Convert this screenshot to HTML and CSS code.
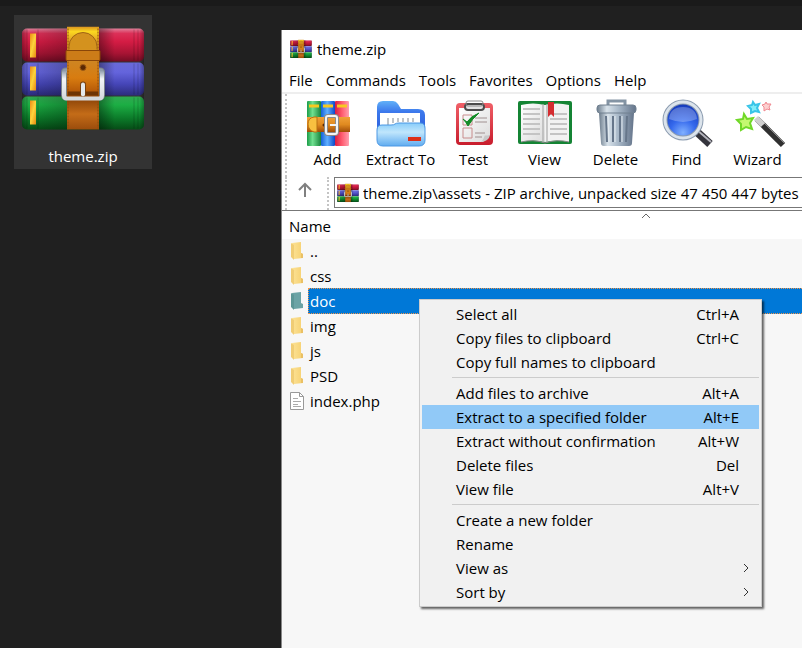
FILE: index.html
```html
<!DOCTYPE html>
<html lang="en">
<head>
    <meta charset="UTF-8">
    <meta name="viewport" content="width=device-width, initial-scale=1.0">
    <title>theme.zip</title>
    <link rel="stylesheet" href="styles.css">
</head>
<body>
    <!-- shared icons -->
    <svg class="sprite" aria-hidden="true">
        <defs>
            <linearGradient id="red" x1="0" y1="0" x2="0" y2="1">
                <stop offset="0" stop-color="#e0809a"/><stop offset=".15" stop-color="#dc3058"/>
                <stop offset=".4" stop-color="#d41c44"/><stop offset=".75" stop-color="#a81434"/><stop offset="1" stop-color="#740c24"/>
            </linearGradient>
            <linearGradient id="blue" x1="0" y1="0" x2="0" y2="1">
                <stop offset="0" stop-color="#6a6ad8"/><stop offset=".3" stop-color="#6464dc"/>
                <stop offset=".65" stop-color="#4646b8"/><stop offset="1" stop-color="#2c2c7c"/>
            </linearGradient>
            <linearGradient id="green" x1="0" y1="0" x2="0" y2="1">
                <stop offset="0" stop-color="#30a850"/><stop offset=".25" stop-color="#1cae44"/>
                <stop offset=".65" stop-color="#0c7c2a"/><stop offset="1" stop-color="#064c16"/>
            </linearGradient>
            <linearGradient id="gold" x1="0" y1="0" x2="1" y2="1">
                <stop offset="0" stop-color="#ee8a14"/><stop offset=".5" stop-color="#fcd43c"/><stop offset="1" stop-color="#e88a10"/>
            </linearGradient>
            <linearGradient id="belt" x1="0" y1="0" x2="0" y2="1">
                <stop offset="0" stop-color="#d89020"/><stop offset=".05" stop-color="#fcd820"/><stop offset=".14" stop-color="#e0a024"/>
                <stop offset=".35" stop-color="#cf8420"/><stop offset=".5" stop-color="#d87c10"/><stop offset=".62" stop-color="#b85c08"/><stop offset=".7" stop-color="#8c4408"/>
                <stop offset=".85" stop-color="#c46c18"/><stop offset="1" stop-color="#9a4c0c"/>
            </linearGradient>
            <linearGradient id="steel" x1="0" y1="0" x2="0" y2="1">
                <stop offset="0" stop-color="#8f9cac"/><stop offset=".3" stop-color="#f2f4f6"/><stop offset="1" stop-color="#d4d8dc"/>
            </linearGradient>
            <linearGradient id="spineShade" x1="0" y1="0" x2="1" y2="0">
                <stop offset="0" stop-color="#000" stop-opacity=".3"/><stop offset=".05" stop-color="#000" stop-opacity="0"/>
                <stop offset=".62" stop-color="#000" stop-opacity=".4"/><stop offset=".76" stop-color="#000" stop-opacity="0"/>
                <stop offset=".96" stop-color="#000" stop-opacity="0"/><stop offset="1" stop-color="#000" stop-opacity=".3"/>
            </linearGradient>
            <linearGradient id="bookGreen"><stop offset="0" stop-color="#1c9c48"/><stop offset=".4" stop-color="#70e090"/><stop offset="1" stop-color="#18843c"/></linearGradient>
            <linearGradient id="bookBlue"><stop offset="0" stop-color="#1460d8"/><stop offset=".45" stop-color="#60b0ff"/><stop offset="1" stop-color="#0c48c8"/></linearGradient>
            <linearGradient id="bookRed"><stop offset="0" stop-color="#d81c40"/><stop offset=".5" stop-color="#ff5c70"/><stop offset="1" stop-color="#ffa0b0"/></linearGradient>
            <linearGradient id="strap" x1="0" y1="0" x2="0" y2="1"><stop offset="0" stop-color="#f0a038"/><stop offset=".5" stop-color="#e08a20"/><stop offset="1" stop-color="#a04c08"/></linearGradient>
            <linearGradient id="folderBack" x1="0" y1="0" x2="0" y2="1"><stop offset="0" stop-color="#60b0f8"/><stop offset=".3" stop-color="#3c78ec"/><stop offset="1" stop-color="#2858d8"/></linearGradient>
            <linearGradient id="folderFront" x1="0" y1="0" x2="0" y2="1"><stop offset="0" stop-color="#88ccfa"/><stop offset=".4" stop-color="#c0e6fc"/><stop offset="1" stop-color="#60acf0"/></linearGradient>
            <linearGradient id="can"><stop offset="0" stop-color="#6c7c8c"/><stop offset=".25" stop-color="#d8e2ea"/><stop offset=".55" stop-color="#a8b8c8"/><stop offset="1" stop-color="#64748a"/></linearGradient>
            <linearGradient id="clip" x1="0" y1="0" x2="0" y2="1"><stop offset="0" stop-color="#f06068"/><stop offset="1" stop-color="#c81c2c"/></linearGradient>
            <linearGradient id="paper" x1="0" y1="0" x2="1" y2="1"><stop offset="0" stop-color="#fff"/><stop offset="1" stop-color="#dcdcdc"/></linearGradient>
            <radialGradient id="lens" cx=".5" cy=".85" r=".8"><stop offset="0" stop-color="#80b0ff"/><stop offset=".45" stop-color="#3468ec"/><stop offset="1" stop-color="#1438b8"/></radialGradient>
            <linearGradient id="fold"><stop offset="0" stop-color="#fce296"/><stop offset="1" stop-color="#f6d070"/></linearGradient>
        </defs>

        <symbol id="winrar" viewBox="0 0 124 104">
            <rect x="1" y="2" width="122" height="33" rx="5" fill="url(#red)"/>
            <rect x="1" y="36" width="122" height="33" rx="5" fill="url(#blue)"/>
            <rect x="1" y="70" width="122" height="33" rx="5" fill="url(#green)"/>
            <rect x="1" y="2" width="122" height="101" rx="5" fill="url(#spineShade)"/>
            <path d="M6 3v31M17 3v31M113 3v31M117 3v31M6 37v31M17 37v31M113 37v31M117 37v31M6 71v31M17 71v31M113 71v31M117 71v31" stroke="#000" stroke-opacity=".18"/>
            <g fill="url(#gold)"><rect x="9" y="7" width="6" height="24"/><rect x="9" y="40" width="6" height="24"/><rect x="9" y="74" width="6" height="24"/></g>
            <path d="M48 44h-3q-2 0-2 2v22q0 3 3 3h32q3 0 3-3V46q0-2-2-2h-3" fill="none" stroke="#7c848c" stroke-width="6"/>
            <path d="M46 0h32v103H46z" fill="url(#belt)"/>
            <path d="M47 2v100M77 2v100" stroke="#8a4808" stroke-dasharray="2 1"/>
            <path d="M48 23V20a14 14 0 0 1 28 0v3" fill="#d4921e" stroke="#a06414"/>
            <rect x="45" y="24" width="34" height="10" rx="1" fill="#cc7c18" stroke="#8a4608"/>
            <path d="M47 65h30v4H47z" fill="#6e3404"/>
            <path d="M46 44h-1q-2 0-2 2v23q0 3 3 3h32q3 0 3-3V46q0-2-2-2h-1" fill="none" stroke="url(#steel)" stroke-width="4"/>
            <circle cx="62" cy="41" r="3" fill="#5a2804" stroke="#a05c14"/>
            <path d="M62 58v9" stroke="#774010" stroke-width="6" stroke-linecap="round"/>
            <path d="M62 58v10" stroke="#e4e8ec" stroke-width="4" stroke-linecap="round"/>
        </symbol>

        <symbol id="folder" viewBox="0 0 14 18">
            <path d="M2 1l9-1v11l2 1v4l-9 1z" fill="url(#fold)"/>
            <path d="M11 11l2 1v4l-2 0z" fill="#eac064"/>
            <path d="M1 1l3 2v15l-3-3z" fill="#f0cc74"/>
        </symbol>
    </svg>

    <main class="desktop">
        <div class="shortcuts">
            <a href="#" class="shortcut">
                <svg class="shortcut-icon" viewBox="0 0 124 104"><use href="#winrar"/></svg>
                <span>theme.zip</span>
            </a>
        </div>

        <section class="window">
            <header class="title-bar">
                <svg class="app-icon"><use href="#winrar"/></svg>
                <h1>theme.zip</h1>
            </header>

            <nav class="menu-bar">
                <button type="button">File</button>
                <button type="button">Commands</button>
                <button type="button">Tools</button>
                <button type="button">Favorites</button>
                <button type="button">Options</button>
                <button type="button">Help</button>
            </nav>

            <div class="toolbar">
                <button type="button" class="tool">
                    <svg viewBox="0 0 56 50">
                        <rect x="7" y="2" width="14" height="45" rx="1" fill="url(#bookGreen)"/>
                        <rect x="21" y="2" width="14" height="45" rx="1" fill="url(#bookBlue)"/>
                        <rect x="35" y="2" width="14" height="45" rx="1" fill="url(#bookRed)"/>
                        <path d="M9 7h10M23 7h10M37 7h10" stroke="#f8c820" stroke-width="3"/>
                        <path d="M7 18h43v15H7z" fill="url(#strap)"/>
                        <path d="M17 18h-3q-6 1-6 7t6 8h3z" fill="#f8c040" stroke="#b87010"/>
                        <circle cx="24" cy="26" r="1.500" fill="#5a2804"/>
                        <rect x="26" y="17" width="11" height="18" rx="2" fill="none" stroke="#8a8a8a" stroke-width="4"/>
                        <rect x="26" y="17" width="11" height="18" rx="2" fill="none" stroke="#f4f4f4" stroke-width="2"/>
                        <path d="M30 26h7" stroke="#f4f4f4" stroke-width="2"/>
                    </svg>
                    Add
                </button>
                <button type="button" class="tool tool-wide">
                    <svg viewBox="0 0 56 50">
                        <path d="M4 38V8q0-6 6-6h10q3 0 5 3l3 5h17q7 0 7 6v22z" fill="url(#folderBack)"/>
                        <path d="M7 14h40v15H7z" fill="#fff"/>
                        <path d="M15 19v8M20 19v5M25 19v4M30 19v4M35 19v4M40 19v4" stroke="#c0c4c8" stroke-width="2"/>
                        <path d="M4 31q0-5 5-5h9q3 0 4-1t4-1h21q5 0 5 5v12q0 6-6 6H10q-6 0-6-6z" fill="url(#folderFront)" stroke="#4c98e4"/>
                        <path d="M35 38h13v4H35z" fill="#dc3018"/>
                    </svg>
                    Extract To
                </button>
                <button type="button" class="tool">
                    <svg viewBox="0 0 56 50">
                        <rect x="10" y="4" width="37" height="42" rx="4" fill="url(#clip)"/>
                        <path d="M13 9h31v27l-7 7H13z" fill="url(#paper)"/>
                        <path d="M44 36q-6 1-5 0-1 4-4 7 8-1 9-7z" fill="#c8c8c8"/>
                        <rect x="19" y="5" width="19" height="6" rx="3" fill="#e4e4e4" stroke="#4c4c4c" stroke-width="2"/>
                        <rect x="20" y="2" width="17" height="5" rx="2" fill="none" stroke="#8c8c8c"/>
                        <path d="M17 16h9v10h-9zM17 29h9v10h-9z" fill="none" stroke="#c88c8c"/>
                        <path d="M29 19h12M29 23h12M29 34h10M29 38h7" stroke="#a09090"/>
                        <path d="M17 20l4 3q4-6 12-9-7 6-11 13-2-4-5-7z" fill="#148c28" stroke="#148c28"/>
                    </svg>
                    Test
                </button>
                <button type="button" class="tool">
                    <svg viewBox="0 0 56 50">
                        <rect x="1" y="2" width="54" height="43" rx="2" fill="#148434"/>
                        <path d="M4 6q12-3 24 0v37q-12-3-24 0z" fill="url(#paper)"/>
                        <path d="M52 6q-12-3-24 0v37q12-3 24 0z" fill="#f2f2f2"/>
                        <path d="M4 43q12-3 24 1 12-4 24-1" fill="none" stroke="#888"/>
                        <path d="M26 5v38M30 5v38" stroke="#aaa" stroke-opacity=".6" stroke-width="2"/>
                        <path d="M6 10h17M6 15h17M6 20h17M6 25h17M6 30h17M6 35h17M33 15h17M33 20h17M33 25h17M33 30h17M33 35h17" stroke="#c4c4c4" stroke-width="2"/>
                        <path d="M31 3h6v15l-3-3-3 3z" fill="#d42c30"/>
                    </svg>
                    View
                </button>
                <button type="button" class="tool">
                    <svg viewBox="0 0 56 50">
                        <path d="M20 7V2h17v5" fill="none" stroke="#8494a4" stroke-width="3"/>
                        <path d="M11 14h35l-2 30q0 3-3 3H16q-3 0-3-3z" fill="url(#can)"/>
                        <path d="M18 17l1 26M25 17v26M32 17v26M39 17l-1 26" stroke="#66768a" stroke-width="2"/>
                        <path d="M20 17l1 26M27 17v26M34 17v26" stroke="#e4ecf2"/>
                        <rect x="9" y="6" width="39" height="8" rx="3" fill="url(#can)" stroke="#708090"/>
                    </svg>
                    Delete
                </button>
                <button type="button" class="tool">
                    <svg viewBox="0 0 56 50">
                        <path d="M38 33l13 12" stroke="#34343c" stroke-width="8"/>
                        <path d="M38 31l14 12" stroke="#b4b4bc" stroke-width="2"/>
                        <circle cx="24" cy="21" r="18" fill="url(#lens)" stroke="#8c9cb0" stroke-width="5"/>
                        <circle cx="24" cy="21" r="18" fill="none" stroke="#dce4ec" stroke-width="3"/>
                        <path d="M10 20Q11 8 24 8t14 12q-14 6-28 0z" fill="#fff" fill-opacity=".25"/>
                    </svg>
                    Find
                </button>
                <button type="button" class="tool">
                    <svg viewBox="0 0 56 50">
                        <path d="M27 20l26 26" stroke="#303030" stroke-width="6"/>
                        <path d="M28 18l26 26" stroke="#888"/>
                        <path d="M26 19l7 7" stroke="#d0d0d0" stroke-width="6"/>
                        <path d="M14 15l3 5 6-1-3 5 2 6-6-2-5 3v-6l-4-4 6-1z" fill="#c4f870" stroke="#70d828" stroke-width="2"/>
                        <path d="M23 3l2 3 4-1-2 4 2 4-4-1-4 2v-4l-3-3 4-1z" fill="#80ecf8" stroke="#38c4e8" stroke-width="2"/>
                        <path d="M36 3l1 2h4l-2 3 1 3-3-1-3 2v-4l-2-2 3-1z" fill="#fcd0d0" stroke="#f08890"/>
                    </svg>
                    Wizard
                </button>
            </div>

            <div class="address-bar">
                <button type="button" class="up" aria-label="Up">
                    <svg viewBox="0 0 16 16"><path d="M8 15V2M2 8l6-6 6 6" fill="none" stroke="#808080" stroke-width="2"/></svg>
                </button>
                <label class="path">
                    <svg class="app-icon"><use href="#winrar"/></svg>
                    <input type="text" aria-label="Path" value="theme.zip\assets - ZIP archive, unpacked size 47 450 447 bytes">
                </label>
            </div>

            <table class="files">
                <thead>
                    <tr>
                        <th>Name <svg class="sort" viewBox="0 0 10 6"><path d="M1 5l4-4 4 4" fill="none" stroke="#666"/></svg></th>
                    </tr>
                </thead>
                <tbody>
                    <tr><td><div class="file"><svg><use href="#folder"/></svg><span>..</span></div></td></tr>
                    <tr><td><div class="file"><svg><use href="#folder"/></svg><span>css</span></div></td></tr>
                    <tr class="selected"><td><div class="file"><svg viewBox="0 0 14 18"><path d="M2 1l9-1v11l2 1v4l-9 1z" fill="#6ba3a5"/><path d="M1 1l3 2v15l-3-3z" fill="#5c9696"/></svg><span>doc</span></div></td></tr>
                    <tr><td><div class="file"><svg><use href="#folder"/></svg><span>img</span></div></td></tr>
                    <tr><td><div class="file"><svg><use href="#folder"/></svg><span>js</span></div></td></tr>
                    <tr><td><div class="file"><svg><use href="#folder"/></svg><span>PSD</span></div></td></tr>
                    <tr><td><div class="file"><svg viewBox="0 0 14 18"><path d="M.5.5h9l4 4v13H.5z" fill="#fff" stroke="#999"/><path d="M9.500.5v4h4" fill="none" stroke="#999"/><path d="M3 6.500h5M3 9.500h8M3 12.500h5M3 14.500h8" stroke="#aaa"/></svg><span>index.php</span></div></td></tr>
                </tbody>
            </table>

            <div class="context-menu" role="menu">
                <button type="button" role="menuitem">Select all <kbd>Ctrl+A</kbd></button>
                <button type="button" role="menuitem">Copy files to clipboard <kbd>Ctrl+C</kbd></button>
                <button type="button" role="menuitem">Copy full names to clipboard</button>
                <hr>
                <button type="button" role="menuitem">Add files to archive <kbd>Alt+A</kbd></button>
                <button type="button" role="menuitem" class="active">Extract to a specified folder <kbd>Alt+E</kbd></button>
                <button type="button" role="menuitem">Extract without confirmation <kbd>Alt+W</kbd></button>
                <button type="button" role="menuitem">Delete files <kbd>Del</kbd></button>
                <button type="button" role="menuitem">View file <kbd>Alt+V</kbd></button>
                <hr>
                <button type="button" role="menuitem">Create a new folder</button>
                <button type="button" role="menuitem">Rename</button>
                <button type="button" role="menuitem" class="submenu">View as <svg viewBox="0 0 6 10"><path d="M1 1l4 4-4 4" fill="none" stroke="#333"/></svg></button>
                <button type="button" role="menuitem" class="submenu">Sort by <svg viewBox="0 0 6 10"><path d="M1 1l4 4-4 4" fill="none" stroke="#333"/></svg></button>
            </div>
        </section>
    </main>
</body>
</html>
```
FILE: styles.css
```css
* {
    box-sizing: border-box;
}

body {
    margin: 0;
    font-family: 'Segoe UI', 'Open Sans', 'Noto Sans', sans-serif;
    font-size: 15px;
    line-height: 20px;
    color: #000;
    background: #202020;
}

button, input, kbd {
    font: inherit;
    color: inherit;
}

button {
    padding: 0;
    border: 0;
    background: none;
    white-space: nowrap;
}

.sprite {
    position: absolute;
    width: 0;
    height: 0;
}

.desktop {
    display: flex;
    min-height: 100vh;
    border-top: 6px solid #1a1a1a;
}

.shortcuts {
    flex: 0 0 281px;
    padding: 9px 14px;
}

.shortcut {
    display: flex;
    flex-direction: column;
    align-items: center;
    gap: 15px;
    width: 138px;
    padding: 11px 0 3px;
    background: #333;
    color: #fff;
    text-decoration: none;
}

.shortcut-icon {
    width: 124px;
    height: 105px;
}

/* window */
.window {
    position: relative;
    flex: 1;
    min-width: 0;
    margin-top: 24px;
    border-left: 1px solid #888;
    background: linear-gradient(#fff, #fff) top / 100% 209px no-repeat #f7f7f7;
    overflow: hidden;
}

.title-bar {
    display: flex;
    align-items: center;
    gap: 5px;
    height: 38px;
    padding-left: 8px;
}

.title-bar h1 {
    margin: 0;
    font-size: 15px;
    font-weight: normal;
}

.app-icon {
    flex: none;
    width: 22px;
    height: 20px;
}

.menu-bar {
    display: flex;
    gap: 13px;
    height: 26px;
    padding-left: 7px;
    border-bottom: 2px solid #eee;
}

/* toolbar */
.toolbar {
    display: flex;
    height: 83px;
    margin-left: 3px;
    padding: 5px 0 0 5px;
    border-left: 2px dotted #c4c4c4;
}

.tool {
    display: flex;
    flex-direction: column;
    align-items: center;
    flex: 0 0 71px;
}

.tool-wide {
    flex-basis: 75px;
}

.tool svg {
    width: 56px;
    height: 50px;
}

.address-bar {
    display: flex;
    height: 33px;
    margin-left: 3px;
    border-left: 2px dotted #c4c4c4;
}

.up {
    display: flex;
    align-items: center;
    justify-content: center;
    width: 42px;
    margin-right: 5px;
    padding: 0 4px 7px 0;
    border-right: 2px dotted #c4c4c4;
}

.up svg {
    width: 16px;
    height: 16px;
}

.path {
    display: flex;
    flex: 1;
    align-items: center;
    gap: 4px;
    height: 31px;
    padding-left: 2px;
    border: 1px solid #777;
    border-right: 0;
}

.path input {
    flex: 1;
    min-width: 0;
    padding: 0;
    border: 0;
    outline: 0;
    background: none;
}

/* file list */
.files {
    width: 100%;
    border-collapse: collapse;
    border-top: 1px solid #777;
}

.files th {
    position: relative;
    height: 28px;
    padding: 2px 0 0 7px;
    background: #fff;
    font-weight: normal;
    text-align: left;
}

.sort {
    position: absolute;
    top: 2px;
    left: 69%;
    width: 10px;
    height: 6px;
}

.files td {
    padding: 0;
}

.file {
    display: flex;
    align-items: center;
    gap: 4px;
    height: 25px;
    padding-left: 8px;
}

.file svg {
    width: 14px;
    height: 18px;
}

.file span {
    flex: 1;
    padding: 2px 1px;
    border: 1px dotted transparent;
}

.selected span {
    border-color: #f0964c;
    border-right: 0;
    background: #0078d7;
    color: #fff;
}

/* context menu */
.context-menu {
    position: absolute;
    top: 269px;
    left: 137px;
    width: 343px;
    padding: 2px;
    border: 1px solid #ccc;
    background: #f1f1f1;
    box-shadow: 2px 2px 2px rgba(0, 0, 0, 0.6);
}

.context-menu button {
    display: flex;
    align-items: center;
    justify-content: space-between;
    width: 100%;
    height: 24px;
    padding: 0 20px 0 34px;
}

.context-menu .submenu {
    padding-right: 10px;
}

.context-menu .active {
    background: #91c9f7;
}

.context-menu svg {
    width: 6px;
    height: 10px;
}

.context-menu hr {
    height: 1px;
    margin: 3px 0 3px 30px;
    border: 0;
    background: #ccc;
}
```
